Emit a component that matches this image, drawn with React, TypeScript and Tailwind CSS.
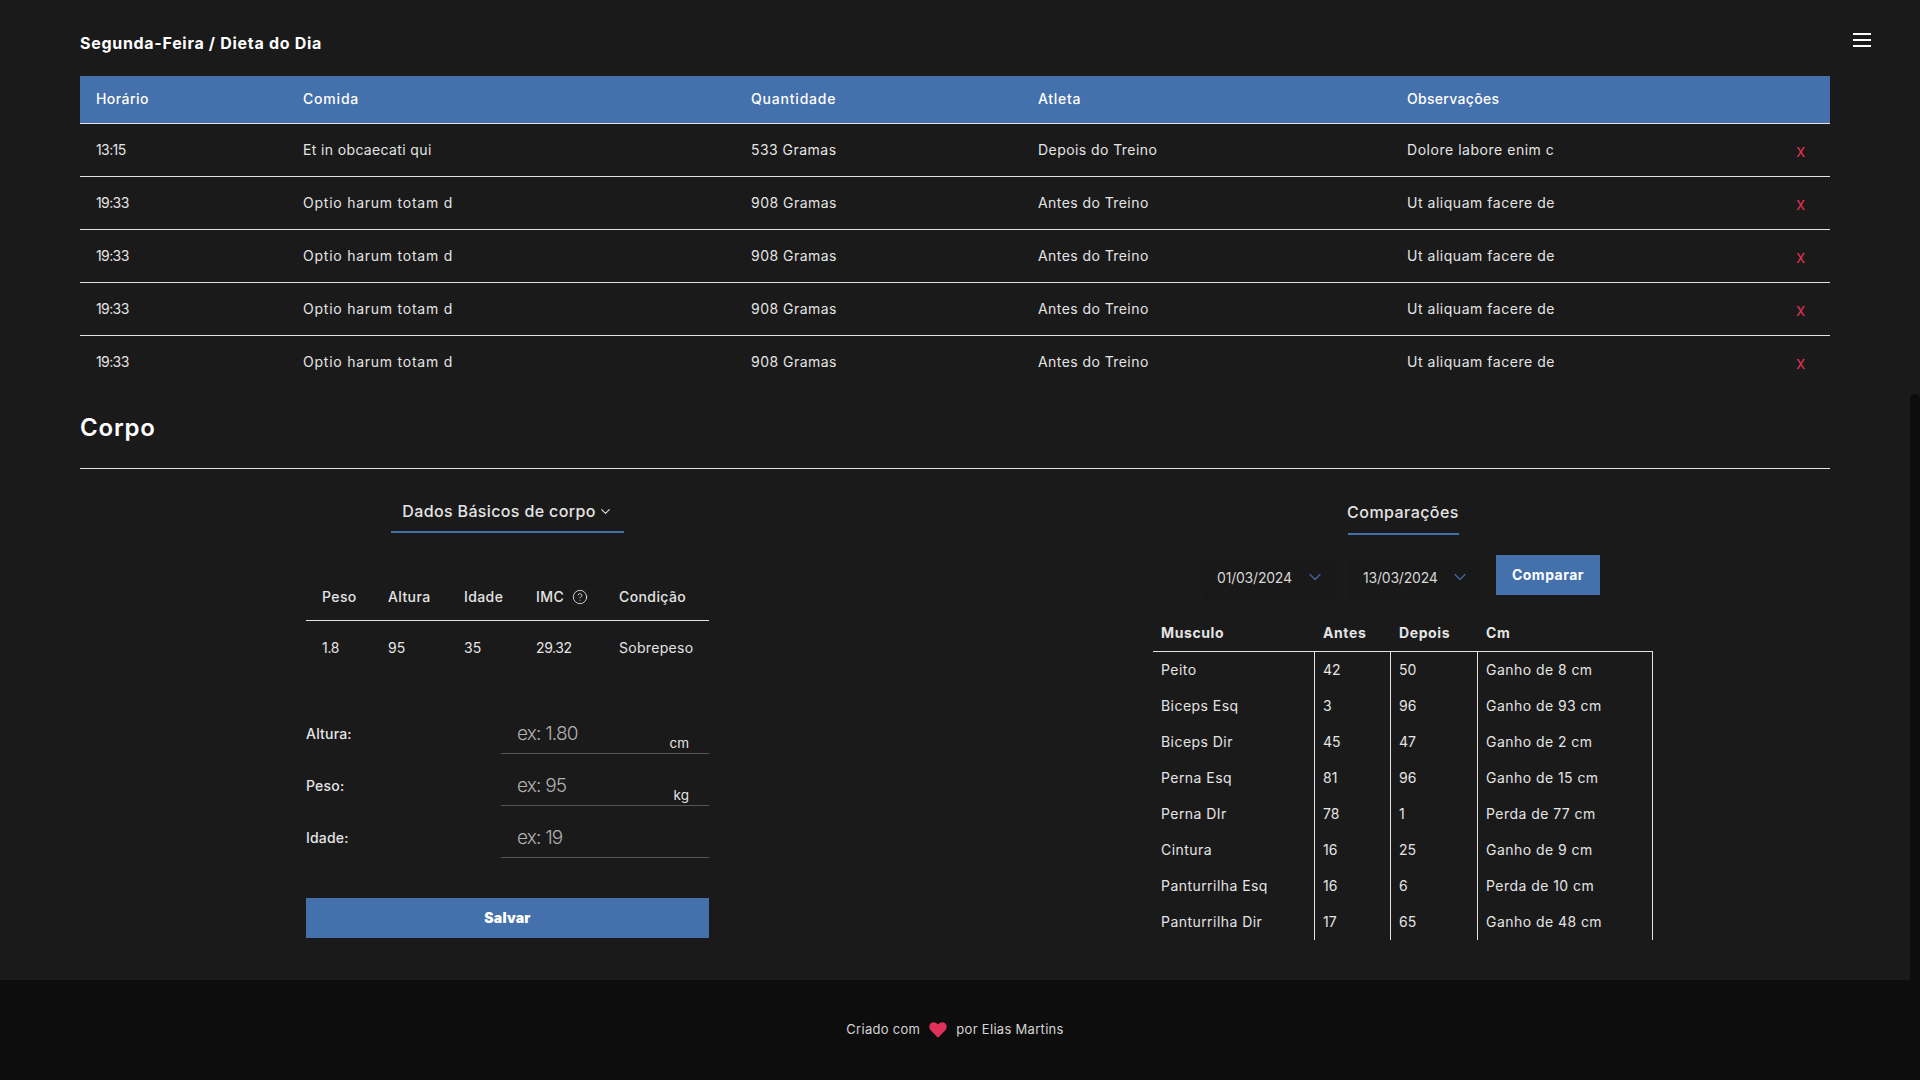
import { ChevronDown, CircleHelp } from "lucide-react";

const meals = [
  ["13:15", "Et in obcaecati qui", "533 Gramas", "Depois do Treino", "Dolore labore enim c"],
  ["19:33", "Optio harum totam d", "908 Gramas", "Antes do Treino", "Ut aliquam facere de"],
  ["19:33", "Optio harum totam d", "908 Gramas", "Antes do Treino", "Ut aliquam facere de"],
  ["19:33", "Optio harum totam d", "908 Gramas", "Antes do Treino", "Ut aliquam facere de"],
  ["19:33", "Optio harum totam d", "908 Gramas", "Antes do Treino", "Ut aliquam facere de"],
];

const mealHeads = [
  { t: "Horário", c: "tracking-[0.45px]" },
  { t: "Comida", c: "tracking-[0.8px]" },
  { t: "Quantidade", c: "tracking-[0.8px]" },
  { t: "Atleta", c: "tracking-[0.7px]" },
  { t: "Observações", c: "tracking-[0.3px]" },
  { t: "", c: "" },
];

const mealCols = ["tracking-[-0.6px]", "tracking-[0.76px]", "tracking-[0.47px]", "tracking-[0.43px]", "tracking-[0.53px]"];

const muscles = [
  ["Peito", "42", "50", "Ganho de 8 cm"],
  ["Biceps Esq", "3", "96", "Ganho de 93 cm"],
  ["Biceps Dir", "45", "47", "Ganho de 2 cm"],
  ["Perna Esq", "81", "96", "Ganho de 15 cm"],
  ["Perna DIr", "78", "1", "Perda de 77 cm"],
  ["Cintura", "16", "25", "Ganho de 9 cm"],
  ["Panturrilha Esq", "16", "6", "Perda de 10 cm"],
  ["Panturrilha Dir", "17", "65", "Ganho de 48 cm"],
];

const muscleCols = ["tracking-[0.45px]", "", "", "tracking-[0.45px]"];

const fields = [
  { label: "Altura:", ph: "ex: 1.80", unit: "cm" },
  { label: "Peso:", ph: "ex: 95", unit: "kg" },
  { label: "Idade:", ph: "ex: 19", unit: "" },
];

function DateBox({ value, width, pr }: { value: string; width: string; pr: string }) {
  return (
    <div className={`${width} ${pr} h-[40px] flex items-center justify-between pl-3 pt-1 bg-[#191919] shadow-[0_2px_3px_rgba(0,0,0,0.12)]`}>
      <span className="text-[14px] tracking-[-0.2px] text-[#d6d6d6]">{value}</span>
      <ChevronDown size={20} strokeWidth={1.7} className="text-[#3f6499]" />
    </div>
  );
}

export default function App() {
  return (
    <div className="h-screen w-full overflow-hidden flex flex-col bg-[#1a1a1a] font-['Inter','Liberation_Sans',sans-serif] text-[#e4e4e4]">
      <div className="flex flex-1 min-h-0">
        <main className="flex-1 min-w-0 pl-[80px] pr-[80px] relative">
          <h1 className="pt-[33px] mb-[22px] h-[54px] leading-[20px] text-[16px] font-bold tracking-[0.7px] text-white">
            Segunda-Feira / Dieta do Dia
          </h1>
          <button aria-label="menu" className="absolute left-[1853px] top-[33px] w-[18px] h-[14px] flex flex-col justify-between">
            <span className="block h-[2px] w-full bg-white" />
            <span className="block h-[2px] w-full bg-white" />
            <span className="block h-[2px] w-full bg-white" />
          </button>

          <table className="w-[1750px] table-fixed border-separate border-spacing-0 text-[14px]">
            <colgroup>
              <col className="w-[207px]" />
              <col className="w-[448px]" />
              <col className="w-[287px]" />
              <col className="w-[369px]" />
              <col className="w-[370px]" />
              <col className="w-[69px]" />
            </colgroup>
            <thead>
              <tr className="h-[48px] bg-[#4470ab] text-white">
                {mealHeads.map((h, i) => (
                  <th key={i} className={`pl-4 pb-[2px] text-left font-medium border-b border-[#e2e2e2] ${h.c}`}>{h.t}</th>
                ))}
              </tr>
            </thead>
            <tbody>
              {meals.map((row, r) => (
                <tr key={r} className="h-[53px]">
                  {row.map((c, i) => (
                    <td
                      key={i}
                      className={`pl-4 pb-[2px] ${r === 0 && i === 1 ? "tracking-[0.36px]" : mealCols[i]} ${r < 4 ? "border-b border-[#e2e2e2]" : ""}`}
                    >
                      {c}
                    </td>
                  ))}
                  <td className={`pl-[35px] pt-[3px] text-[#d9314f] text-[17px] ${r < 4 ? "border-b border-[#e2e2e2]" : ""}`}>x</td>
                </tr>
              ))}
            </tbody>
          </table>

          <h2 className="mt-[23px] h-[32px] leading-[32px] text-[24px] font-semibold tracking-[0.8px] text-white">Corpo</h2>
          <hr className="mt-[24px] border-0 border-t border-[#e2e2e2] w-[1750px]" />

          <div className="flex">
            <section className="ml-[226px] w-[403px]">
              <div className="mt-[23px] mx-auto w-[233px] h-[41px] pb-[1px] flex items-center justify-center gap-[2px] border-b-2 border-[#4470ab]">
                <span className="text-[16px] font-medium tracking-[0.36px]">Dados Básicos de corpo</span>
                <ChevronDown size={15} strokeWidth={1.75} />
              </div>
              <table className="mt-[40px] w-[403px] table-fixed border-separate border-spacing-0 text-[14px]">
                <colgroup>
                  <col className="w-[82px]" />
                  <col className="w-[76px]" />
                  <col className="w-[72px]" />
                  <col className="w-[83px]" />
                  <col className="w-[90px]" />
                </colgroup>
                <thead>
                  <tr className="h-[48px] tracking-[0.4px]">
                    <th className="pl-4 text-left font-medium border-b border-[#e2e2e2]">Peso</th>
                    <th className="text-left font-medium border-b border-[#e2e2e2]">Altura</th>
                    <th className="text-left font-medium border-b border-[#e2e2e2]">Idade</th>
                    <th className="text-left font-medium border-b border-[#e2e2e2]">
                      <span className="flex items-center gap-[8px]">IMC <CircleHelp size={16} strokeWidth={1.3} /></span>
                    </th>
                    <th className="text-left font-medium border-b border-[#e2e2e2]">Condição</th>
                  </tr>
                </thead>
                <tbody>
                  <tr className="h-[54px]">
                    <td className="pl-4 pb-[2px] tracking-[-0.3px]">1.8</td>
                    <td className="pb-[2px]">95</td>
                    <td className="pb-[2px]">35</td>
                    <td className="pb-[2px] tracking-[-0.4px]">29.32</td>
                    <td className="pb-[2px] tracking-[0.3px]">Sobrepeso</td>
                  </tr>
                </tbody>
              </table>

              <div className="mt-[39px] flex flex-col gap-[12px]">
                {fields.map((f) => (
                  <div key={f.label} className="flex items-center h-[40px]">
                    <label className="w-[195px] pb-[2px] text-[14px] font-medium tracking-[0.2px]">{f.label}</label>
                    <div className="relative w-[208px] h-[40px] border-b border-[#555555]">
                      <input
                        readOnly
                        placeholder={f.ph}
                        className="w-full h-full pl-4 bg-transparent outline-none text-[19px] font-light tracking-[-0.8px] placeholder:text-[#b0b0b0]"
                      />
                      {f.unit && <span className="absolute right-[20px] bottom-0 text-[13.5px] text-[#e4e4e4]">{f.unit}</span>}
                    </div>
                  </div>
                ))}
              </div>

              <button className="mt-[40px] w-full h-[40px] pb-[2px] bg-[#4470ab] text-white text-[14px] font-black tracking-[0.2px]">Salvar</button>
            </section>

            <section className="ml-[444px] w-[500px]">
              <div className="mt-[25px] mx-auto w-[111px] h-[41px] pb-[3px] flex items-center justify-center border-b-2 border-[#4470ab]">
                <span className="text-[16px] font-medium tracking-[0.45px]">Comparações</span>
              </div>
              <div className="mt-[20px] ml-[52px] flex gap-[19px]">
                <DateBox value="01/03/2024" width="w-[127px]" pr="pr-[7px]" />
                <DateBox value="13/03/2024" width="w-[126px]" pr="pr-[7px]" />
                <button className="w-[104px] h-[40px] pb-[2px] bg-[#4470ab] text-white text-[14px] font-bold tracking-[0.5px]">Comparar</button>
              </div>
              <div className="mt-[20px] h-[325px] overflow-hidden">
                <table className="w-[500px] table-fixed border-separate border-spacing-0 text-[14px]">
                  <colgroup>
                    <col className="w-[162px]" />
                    <col className="w-[76px]" />
                    <col className="w-[87px]" />
                    <col className="w-[175px]" />
                  </colgroup>
                  <thead>
                    <tr className="h-[37px]">
                      {["Musculo", "Antes", "Depois", "Cm"].map((h) => (
                        <th key={h} className="pl-2 pb-[1px] text-left font-bold tracking-[0.6px] border-b border-[#e2e2e2]">{h}</th>
                      ))}
                    </tr>
                  </thead>
                  <tbody>
                    {muscles.map((row) => (
                      <tr key={row[0]} className="h-[36px]">
                        {row.map((c, i) => (
                          <td key={i} className={`pl-2 pb-[2px] border-r border-[#e2e2e2] ${muscleCols[i]}`}>{c}</td>
                        ))}
                      </tr>
                    ))}
                  </tbody>
                </table>
              </div>
            </section>
          </div>
        </main>
        <div className="w-[10px] shrink-0 flex flex-col justify-end">
          <div className="h-[586px] rounded-t-[5px] bg-[#0d0d0d]" />
        </div>
      </div>
      <footer className="h-[100px] shrink-0 pr-[10px] bg-[#0d0d0d] flex items-center justify-center text-[13px] tracking-[0.3px] text-[#d4d4d4]">
        <span>Criado com</span>
        <svg viewBox="0 0 24 22" className="w-[18px] h-[16px] mx-[9px]" fill="#e1305a">
          <path d="M12 21.5 2.2 11.6C-.6 8.7-.6 4.6 1.9 2.2 4.4-.3 8.6-.2 12 3.6 15.4-.2 19.6-.3 22.1 2.2c2.5 2.4 2.5 6.5-.3 9.4z" />
        </svg>
        <span>por Elias Martins</span>
      </footer>
    </div>
  );
}
